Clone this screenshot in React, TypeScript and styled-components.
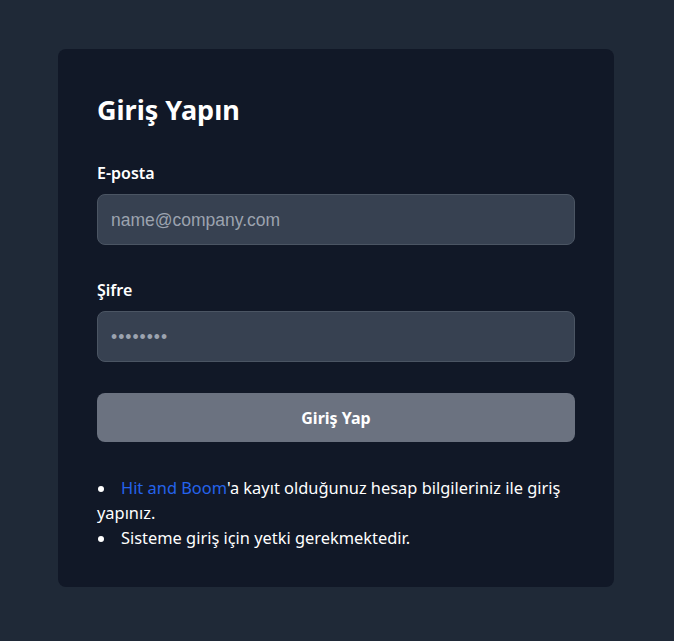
import React from "react";
import styled, { createGlobalStyle } from "styled-components";

const GlobalStyle = createGlobalStyle`
  html, body { margin: 0; padding: 0; background: #1f2937; }
  body { font-family: "Noto Sans", "Open Sans", sans-serif; color: #ffffff; }
  * { box-sizing: border-box; }
`;

const Page = styled.div`
  min-height: 641px;
  display: flex;
  justify-content: flex-start;
  align-items: flex-start;
  padding: 49px 0 0 58px;
`;

const Card = styled.div`
  width: 556px;
  background: #111827;
  border-radius: 8px;
  padding: 43px 39px 37px;
`;

const Title = styled.h1`
  margin: 0 0 33px;
  font-size: 27px;
  line-height: 36px;
  font-weight: 700;
  color: #ffffff;
`;

const Field = styled.div<{ $after: number }>`
  display: flex;
  flex-direction: column;
  gap: 9px;
  margin-bottom: ${(p) => p.$after}px;
`;

const Label = styled.label`
  font-size: 16px;
  line-height: 24px;
  font-weight: 600;
  color: #ffffff;
`;

const Input = styled.input<{ $spaced?: boolean }>`
  height: 51px;
  width: 100%;
  background: #374151;
  border: 1px solid #4b5563;
  border-radius: 8px;
  padding: 2px 13px 0;
  font-family: "Liberation Sans", Arial, sans-serif;
  font-size: 17.5px;
  letter-spacing: ${(p) => (p.$spaced ? "1px" : "0")};
  color: #9ca3af;
  outline: none;
  &::placeholder { color: #9ca3af; }
`;

const Button = styled.button`
  width: 100%;
  height: 49px;
  background: #6b7280;
  border: none;
  border-radius: 8px;
  color: #ffffff;
  font-family: inherit;
  font-size: 16px;
  font-weight: 700;
  margin-bottom: 33px;
  cursor: pointer;
`;

const List = styled.ul`
  margin: 0;
  padding: 0;
  list-style: none;
  font-size: 16.4px;
  line-height: 25px;
  color: #ffffff;
`;

const Item = styled.li`
  &::before {
    content: "";
    display: inline-block;
    width: 6px;
    height: 6px;
    border-radius: 50%;
    background: #ffffff;
    margin: 0 17px 2px 1px;
    vertical-align: middle;
  }
`;

const Link = styled.a`
  color: #2563eb;
  text-decoration: none;
`;

export default function App() {
  return (
    <>
      <GlobalStyle />
      <Page>
        <Card>
          <Title>Giriş Yapın</Title>
          <Field $after={33}>
            <Label>E-posta</Label>
            <Input type="email" placeholder="name@company.com" />
          </Field>
          <Field $after={31}>
            <Label>Şifre</Label>
            <Input type="password" $spaced placeholder="••••••••" />
          </Field>
          <Button>Giriş Yap</Button>
          <List>
            <Item>
              <Link href="#">Hit and Boom</Link>'a kayıt olduğunuz hesap bilgileriniz ile giriş yapınız.
            </Item>
            <Item>Sisteme giriş için yetki gerekmektedir.</Item>
          </List>
        </Card>
      </Page>
    </>
  );
}
